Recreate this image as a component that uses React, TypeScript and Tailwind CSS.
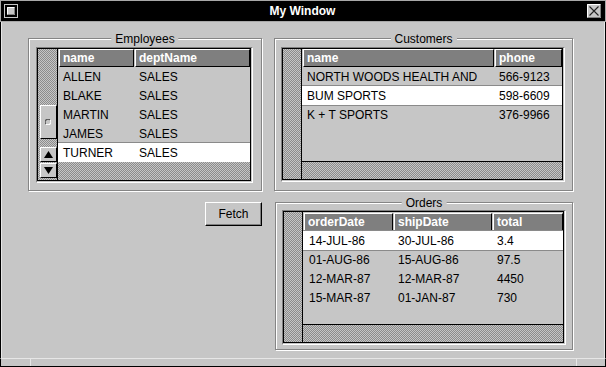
import React from "react";

const HATCH =
  "bg-[repeating-conic-gradient(#8c8c8c_0%_25%,#c6c6c6_0%_50%)] bg-[length:2px_2px]";

type Col = { label: string; w: string; pad: string };

function GroupBox({
  title,
  className,
  children,
}: {
  title: string;
  className: string;
  children: React.ReactNode;
}) {
  return (
    <div
      className={`relative flex border border-[#858585] shadow-[inset_1px_1px_0_#fff,1px_1px_0_#fff] ${className}`}
    >
      <span className="absolute left-1/2 top-0 -translate-x-1/2 -translate-y-1/2 bg-[#c6c6c6] px-[4px] text-[12px] leading-[14px] text-black whitespace-nowrap">
        {title}
      </span>
      {children}
    </div>
  );
}

function Table({
  cols,
  rows,
  selected,
  scrollW,
  scroll,
  headerMt,
  line,
  hatchH,
}: {
  cols: Col[];
  rows: string[][];
  selected: number;
  scrollW: string;
  scroll?: React.ReactNode;
  headerMt: string;
  line: boolean;
  hatchH: string;
}) {
  return (
    <div className="flex flex-1 border border-[#808080] border-r-white border-b-white pr-px pb-px">
      <div className="flex flex-1 border border-black">
        <div className={`${scrollW} ${HATCH} flex flex-col`}>{scroll}</div>
        <div className="w-px bg-black" />
        <div className="flex min-w-0 flex-1 flex-col">
          <div className={`flex h-[18px] gap-px pl-px ${headerMt}`}>
            {cols.map((c) => (
              <div
                key={c.label}
                className={`${c.w} flex items-center border border-white border-r-black border-b-black bg-[#7f7f7f] pl-[3px] text-[12px] font-bold text-white`}
              >
                {c.label}
              </div>
            ))}
          </div>
          <div className="flex flex-1 flex-col">
            {rows.map((r, i) => (
              <div
                key={i}
                className={`flex h-[19px] shrink-0 gap-px pl-px ${
                  i === selected
                    ? "bg-white shadow-[0_-1px_0_#8a8a8a,0_1px_0_#8a8a8a]"
                    : ""
                }`}
              >
                {r.map((v, j) => (
                  <div
                    key={j}
                    className={`${cols[j].w} ${cols[j].pad} flex items-center whitespace-nowrap text-[12px] text-black`}
                  >
                    {v}
                  </div>
                ))}
              </div>
            ))}
          </div>
          {line && <div className="h-px bg-black" />}
          <div className={`${hatchH} ${HATCH}`} />
        </div>
      </div>
    </div>
  );
}

function ArrowBtn({ up }: { up: boolean }) {
  return (
    <div className="flex h-[15px] items-center justify-center border border-white border-r-black border-b-black bg-[#c6c6c6]">
      <svg width="9" height="7" viewBox="0 0 9 7">
        {up ? (
          <polygon points="4.5,0 9,7 0,7" fill="#000" />
        ) : (
          <polygon points="0,0 9,0 4.5,7" fill="#000" />
        )}
      </svg>
    </div>
  );
}

function EmpScroll() {
  return (
    <div className="flex h-full flex-col pl-[2px]">
      <div className="mt-[56px] flex h-[34px] items-center justify-center border border-white border-r-black border-b-black bg-[#c6c6c6] pr-[2px]">
        <svg width="6" height="6" viewBox="0 0 6 6">
          <path d="M1 5 A2.5 2.5 0 0 1 5 1" stroke="#555" strokeWidth="1.2" fill="none" />
          <path d="M5 1 A2.5 2.5 0 0 1 1 5" stroke="#fff" strokeWidth="1.2" fill="none" />
        </svg>
      </div>
      <div className="flex-1" />
      <ArrowBtn up />
      <div className="h-px" />
      <ArrowBtn up={false} />
      <div className="h-[2px]" />
    </div>
  );
}

export default function App() {
  return (
    <div className="flex h-[367px] w-[606px] flex-col overflow-hidden bg-[#c6c6c6] font-['Liberation_Sans',Arial,sans-serif]">
      {/* title bar */}
      <div className="flex h-[22px] shrink-0 items-center border border-[#a8a8a8] bg-black pl-[3px] pr-[4px]">
        <svg width="14" height="14" viewBox="0 0 14 14">
          <rect x="0" y="0" width="14" height="14" fill="#c6c6c6" />
          <rect x="1" y="1" width="12" height="12" fill="#000" />
          <rect x="3" y="3" width="8" height="8" fill="#c6c6c6" />
          <path d="M3.5 10.5 V3.5 H10.5" stroke="#fff" fill="none" />
          <path d="M10.5 3.5 V10.5 H3.5" stroke="#808080" fill="none" />
        </svg>
        <div className="flex-1 text-center text-[12px] font-bold leading-none text-white">
          My Window
        </div>
        <svg width="14" height="14" viewBox="0 0 14 14">
          <rect x="0" y="0" width="14" height="14" fill="#c6c6c6" />
          <path d="M0.5 13.5 V0.5 H13.5" stroke="#fff" fill="none" />
          <path d="M13.5 0.5 V13.5 H0.5" stroke="#808080" fill="none" />
          <path d="M2.5 2.5 L11.5 11.5 M11.5 2.5 L2.5 11.5" stroke="#222" strokeWidth="1.1" />
        </svg>
      </div>

      {/* main */}
      <div className="flex flex-1 border-x border-black pl-[27px] pt-[16px] shadow-[inset_1px_0_0_#e6e6e6,inset_-1px_0_0_#e6e6e6]">
        {/* left column */}
        <div className="flex w-[234px] flex-col items-end">
          <GroupBox title="Employees" className="h-[153px] w-[234px] pb-[7px] pl-[7px] pr-[8px] pt-[8px]">
            <Table
              cols={[
                { label: "name", w: "w-[75px]", pad: "pl-[4px]" },
                { label: "deptName", w: "flex-1", pad: "pl-[4px]" },
              ]}
              rows={[
                ["ALLEN", "SALES"],
                ["BLAKE", "SALES"],
                ["MARTIN", "SALES"],
                ["JAMES", "SALES"],
                ["TURNER", "SALES"],
              ]}
              selected={4}
              scrollW="w-[19px]"
              scroll={<EmpScroll />}
              headerMt=""
              line={false}
              hatchH="h-[18px]"
            />
          </GroupBox>
          <button className="mt-[11px] flex h-[24px] w-[57px] items-center justify-center border border-white border-r-black border-b-black bg-[#c6c6c6] text-[12px] text-black shadow-[inset_-1px_-1px_0_#808080]">
            Fetch
          </button>
        </div>

        {/* right column */}
        <div className="ml-[12px] flex w-[299px] flex-col">
          <GroupBox title="Customers" className="h-[153px] w-[299px] pb-[8px] pl-[6px] pr-[7px] pt-[8px]">
            <Table
              cols={[
                { label: "name", w: "w-[191px]", pad: "pl-[4px]" },
                { label: "phone", w: "flex-1", pad: "pl-[4px]" },
              ]}
              rows={[
                ["NORTH WOODS HEALTH AND", "566-9123"],
                ["BUM SPORTS", "598-6609"],
                ["K + T SPORTS", "376-9966"],
              ]}
              selected={1}
              scrollW="w-[18px]"
              headerMt=""
              line={true}
              hatchH="h-[17px]"
            />
          </GroupBox>
          <GroupBox title="Orders" className="ml-px mt-[11px] h-[148px] w-[298px] pb-[4px] pl-[6px] pr-[6px] pt-[7px]">
            <Table
              cols={[
                { label: "orderDate", w: "w-[89px]", pad: "pl-[5px]" },
                { label: "shipDate", w: "w-[98px]", pad: "pl-[4px]" },
                { label: "total", w: "flex-1", pad: "pl-[4px]" },
              ]}
              rows={[
                ["14-JUL-86", "30-JUL-86", "3.4"],
                ["01-AUG-86", "15-AUG-86", "97.5"],
                ["12-MAR-87", "12-MAR-87", "4450"],
                ["15-MAR-87", "01-JAN-87", "730"],
              ]}
              selected={0}
              scrollW="w-[18px]"
              headerMt="mt-px"
              line={true}
              hatchH="h-[17px]"
            />
          </GroupBox>
        </div>
      </div>

      {/* status bar */}
      <div className="flex h-[9px] shrink-0 border-x border-b border-t border-black border-t-[#e6e6e6]">
        <div className="w-[29px]" />
        <div className="w-px bg-[#e6e6e6]" />
        <div className="flex-1" />
        <div className="w-px bg-[#e6e6e6]" />
        <div className="w-[28px]" />
      </div>
    </div>
  );
}
